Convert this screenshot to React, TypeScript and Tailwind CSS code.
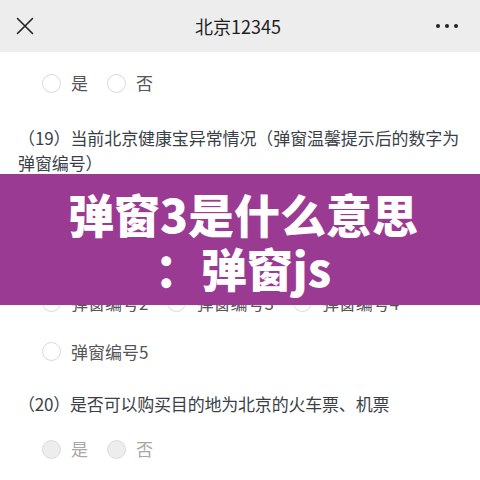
import React from "react";

const font = { fontFamily: '"Noto Sans CJK SC", "Noto Sans", sans-serif' };

function Radio({ label, disabled }: { label: string; disabled?: boolean }) {
  return (
    <div className="flex items-center gap-[10px]">
      <span
        className={
          disabled
            ? "w-[19px] h-[19px] rounded-full border border-[#dcdcdc] bg-[#ededed]"
            : "w-[19px] h-[19px] rounded-full border border-[#d9d9d9] bg-white"
        }
      />
      <span className={disabled ? "text-[17px] text-[#a8a8a8]" : "text-[17px] text-[#555]"}>{label}</span>
    </div>
  );
}

function Row({ items, disabled }: { items: string[]; disabled?: boolean }) {
  return (
    <div className="h-[49px] flex items-center gap-[19px] pl-[24px]">
      {items.map((t) => (
        <Radio key={t} label={t} disabled={disabled} />
      ))}
    </div>
  );
}

export default function App() {
  return (
    <div className="relative w-[480px] h-[480px] overflow-hidden bg-white" style={font}>
      <div className="h-[52px] bg-[#ededed] flex items-center justify-between px-[16px]">
        <svg width="18" height="18" viewBox="0 0 18 18" className="text-[#222]">
          <path d="M1.5 1.5 L16.5 16.5 M16.5 1.5 L1.5 16.5" stroke="currentColor" strokeWidth="1.6" strokeLinecap="round" />
        </svg>
        <div className="text-[18px] text-[#1f1f1f] ml-[6px]">北京12345</div>
        <div className="flex gap-[5px] pr-[6px]">
          <span className="w-[4px] h-[4px] rounded-full bg-[#222]" />
          <span className="w-[4px] h-[4px] rounded-full bg-[#222]" />
          <span className="w-[4px] h-[4px] rounded-full bg-[#222]" />
        </div>
      </div>

      <div className="pl-[18px] pr-[14px]">
        <div className="h-[62px] flex items-center gap-[19px] pl-[24px]">
          <Radio label="是" />
          <Radio label="否" />
        </div>

        <div className="mt-[11px] text-[17px] leading-[25px] text-[#3a3f48] tracking-[-0.1px]">
          （19）当前北京健康宝异常情况（弹窗温馨提示后的数字为弹窗编号）
        </div>

        <div className="mt-[5px]">
          <div className="h-[98px]" />
          <Row items={["弹窗编号2", "弹窗编号3", "弹窗编号4"]} />
          <Row items={["弹窗编号5"]} />
        </div>

        <div className="mt-[15px] text-[17px] leading-[25px] text-[#3a3f48] tracking-[-0.2px]">
          （20）是否可以购买目的地为北京的火车票、机票
        </div>

        <div className="mt-[10px] h-[46px] flex items-center gap-[19px] pl-[24px]">
          <Radio label="是" disabled />
          <Radio label="否" disabled />
        </div>
      </div>

      <div className="absolute left-0 top-[174px] w-[480px] h-[131px] bg-[#9b3a92] flex flex-col items-center justify-center">
        <div className="text-white font-black text-[46px] leading-[54px] pl-[6px]">弹窗3是什么意思</div>
        <div className="text-white font-black text-[46px] leading-[54px] pl-[6px]">：弹窗js</div>
      </div>
    </div>
  );
}
